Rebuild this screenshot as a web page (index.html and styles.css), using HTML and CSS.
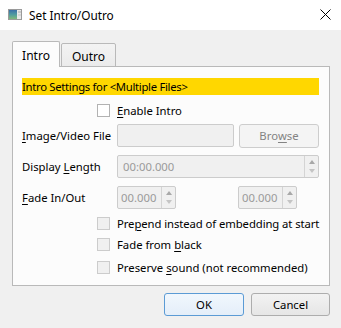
FILE: index.html
```html
<!DOCTYPE html>
<html>
<head>
<meta charset="utf-8">
<link rel="stylesheet" href="styles.css">
</head>
<body>
<div class="window">
  <div class="titlebar">
    <svg class="appicon" width="14" height="11" viewBox="0 0 14 11">
      <defs>
        <linearGradient id="g1" x1="0" y1="0" x2="0" y2="1">
          <stop offset="0" stop-color="#3b6fa8"/>
          <stop offset="0.5" stop-color="#4f9aa0"/>
          <stop offset="1" stop-color="#7fb87a"/>
        </linearGradient>
      </defs>
      <rect x="0.5" y="0.5" width="13" height="10" fill="#e8e8e8" stroke="#9a9a9a"/>
      <rect x="1" y="1" width="8" height="9" fill="url(#g1)"/>
      <rect x="10" y="2" width="3" height="2" fill="#c9c9c9"/>
      <rect x="10" y="5" width="3" height="2" fill="#d6d6d6"/>
    </svg>
    <span class="title">Set Intro/Outro</span>
    <svg class="close" width="11" height="11" viewBox="0 0 11 11">
      <path d="M0.5 0.5 L10.5 10.5 M10.5 0.5 L0.5 10.5" stroke="#000" stroke-width="1" fill="none"/>
    </svg>
  </div>
  <div class="content">
    <div class="tabs">
      <div class="tab active">Intro</div>
      <div class="tab">Outro</div>
    </div>
    <div class="pane">
      <div class="banner">Intro Settings for &lt;Multiple Files&gt;</div>
      <div class="check-row enable"><span class="box"></span><span><u>E</u>nable Intro</span></div>
      <div class="field-row r-image">
        <span class="lbl"><u>I</u>mage/Video File</span>
        <div class="edit"></div>
        <div class="btn browse">Bro<u>w</u>se</div>
      </div>
      <div class="field-row r-display">
        <span class="lbl">Display <u>L</u>ength</span>
        <div class="spin wide"><span class="val">00:00.000</span><span class="arrows"><span class="up"></span><span class="down"></span></span></div>
      </div>
      <div class="field-row r-fade">
        <span class="lbl"><u>F</u>ade In/Out</span>
        <div class="spin small"><span class="val">00.000</span><span class="arrows"><span class="up"></span><span class="down"></span></span></div>
        <div class="spin small second"><span class="val">00.000</span><span class="arrows"><span class="up"></span><span class="down"></span></span></div>
      </div>
      <div class="check-row dis c1"><span class="box"></span><span>Pre<u>p</u>end instead of embedding at start</span></div>
      <div class="check-row dis c2"><span class="box"></span><span>Fade from <u>b</u>lack</span></div>
      <div class="check-row dis c3"><span class="box"></span><span>Preserve <u>s</u>ound (not recommended)</span></div>
    </div>
    <div class="buttons">
      <div class="btn ok">OK</div>
      <div class="btn cancel">Cancel</div>
    </div>
  </div>
</div>
</body>
</html>
```

FILE: styles.css
```css
html, body {
  margin: 0;
  padding: 0;
}
body {
  width: 341px;
  height: 328px;
  overflow: hidden;
  font-family: "Noto Sans", "Open Sans", sans-serif;
  font-size: 11.3px;
  color: #000;
  background: #f0f0f0;
}
u {
  text-decoration: underline;
  text-decoration-thickness: 1px;
  text-underline-offset: 2px;
}
.window {
  width: 341px;
  height: 328px;
  background: #f0f0f0;
}
.titlebar {
  height: 30px;
  background: #fff;
  display: flex;
  align-items: center;
  padding-left: 8px;
  box-sizing: border-box;
  font-size: 11.8px;
}
.appicon {
  display: block;
  margin-top: -1px;
}
.title {
  margin-left: 7px;
  flex: 1;
  line-height: 16px;
}
.close {
  display: block;
  margin-right: 10px;
  margin-top: -1px;
}
.content {
  padding: 11px 11px 0 12px;
}
.tabs {
  display: flex;
  align-items: flex-end;
  height: 26px;
  margin-bottom: -1px;
}
.tab {
  box-sizing: border-box;
  border: 1px solid #b9b9b9;
  border-radius: 2px 2px 0 0;
  text-align: center;
  line-height: 16px;
  background: linear-gradient(#f3f3f3, #ebebeb);
  height: 24px;
  width: 55px;
  margin-left: 1px;
  padding-top: 5px;
  font-size: 12px;
}
.tab.active {
  position: relative;
  z-index: 1;
  height: 26px;
  width: 48px;
  margin-left: 0;
  background: #fcfcfc;
  border-bottom: none;
  padding-top: 6px;
}
.pane {
  box-sizing: border-box;
  height: 220px;
  border: 1px solid #b9b9b9;
  background: #fcfcfc;
  padding: 11px 10px 0 9px;
}
.banner {
  height: 17px;
  line-height: 17px;
  background: #ffd700;
  white-space: nowrap;
  letter-spacing: -0.3px;
}
.check-row {
  height: 13px;
  display: flex;
  align-items: center;
  padding-left: 75px;
  white-space: nowrap;
  line-height: 13px;
}
.check-row .box {
  box-sizing: border-box;
  width: 13px;
  height: 13px;
  border: 1px solid #b2b2b2;
  background: #fff;
  margin-right: 7px;
  flex: none;
}
.check-row.dis .box {
  border-color: #cccccc;
  background: #f0f0f0;
}
.c1 span:last-child {
  letter-spacing: -0.08px;
}
.enable { margin-top: 9px; }
.c1 { margin-top: 8px; }
.c2 { margin-top: 8px; }
.c3 { margin-top: 10px; }
.field-row {
  display: flex;
  align-items: center;
  height: 23px;
}
.r-image { margin-top: 7px; }
.r-display { margin-top: 8px; }
.r-fade { margin-top: 8px; }
.lbl {
  width: 95px;
  flex: none;
  white-space: nowrap;
}
.edit {
  box-sizing: border-box;
  width: 117px;
  height: 23px;
  border: 1px solid #cccccc;
  border-radius: 2px;
  background: #f0f0f0;
}
.btn {
  box-sizing: border-box;
  height: 23px;
  border: 1px solid #adadad;
  border-radius: 3px;
  background: linear-gradient(#f2f2f2, #e6e6e6);
  display: flex;
  align-items: center;
  justify-content: center;
}
.browse {
  width: 80px;
  margin-left: 5px;
  height: 24px;
  color: #838383;
  border-color: #cdcdcd;
  background: #f4f4f4;
}
.spin {
  box-sizing: border-box;
  height: 23px;
  border: 1px solid #cccccc;
  border-radius: 2px;
  background: #f0f0f0;
  display: flex;
  color: #9a9a9a;
}
.spin.wide { flex: 1; }
.spin.small { width: 59px; }
.spin.second { margin-left: 62px; }
.spin .val {
  flex: 1;
  padding-left: 3px;
  line-height: 21px;
  overflow: hidden;
}
.spin.wide .val { padding-left: 5px; }
.spin .arrows {
  width: 13px;
  border-left: 1px solid #d4d4d4;
  display: flex;
  flex-direction: column;
  align-items: center;
  justify-content: center;
  gap: 5px;
}
.spin .up {
  width: 0;
  height: 0;
  border-left: 3.5px solid transparent;
  border-right: 3.5px solid transparent;
  border-bottom: 4px solid #a8a8a8;
}
.spin .down {
  width: 0;
  height: 0;
  border-left: 3.5px solid transparent;
  border-right: 3.5px solid transparent;
  border-top: 4px solid #c4c4c4;
}
.buttons {
  display: flex;
  justify-content: flex-end;
  gap: 7px;
  margin-top: 7px;
}
.ok {
  width: 80px;
  border-color: #5b9bd5;
  background: linear-gradient(#f1f7fd, #e4eef9);
}
.cancel {
  width: 79px;
}
```
